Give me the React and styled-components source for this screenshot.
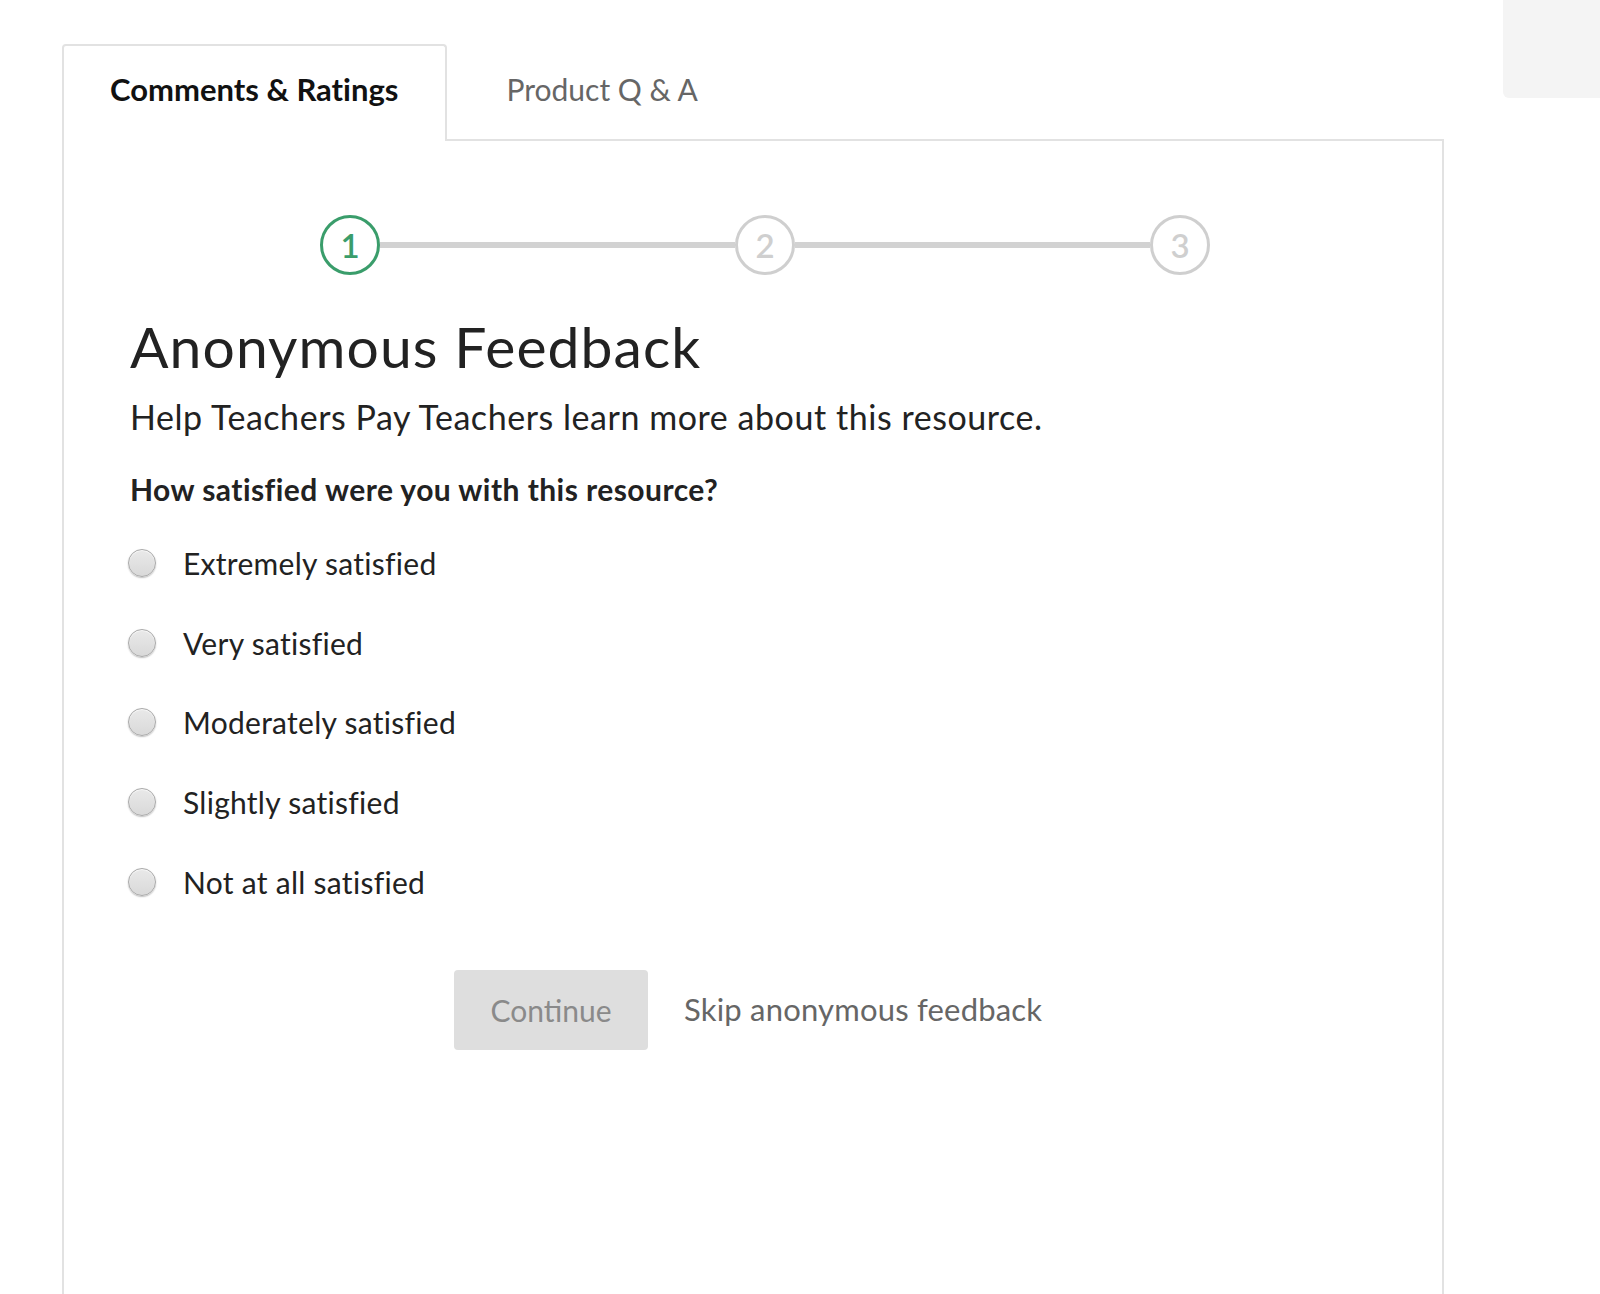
import React from "react";
import styled, { createGlobalStyle } from "styled-components";

const Global = createGlobalStyle`
  html, body { margin: 0; padding: 0; background: #fff; }
  body {
    font-family: Lato, "Open Sans", sans-serif;
    color: #222;
    font-variant-ligatures: none;
  }
`;

const Page = styled.div`
  position: relative;
  height: 1294px;
  overflow: hidden;
  padding: 44px 0 0 62px;
  box-sizing: border-box;
`;

const CornerBox = styled.div`
  position: absolute;
  top: 0;
  right: 0;
  width: 97px;
  height: 98px;
  background: #f4f4f4;
  border-bottom-left-radius: 6px;
`;

const Tabs = styled.div`
  display: flex;
  align-items: stretch;
  height: 95px;
  width: 1382px;
`;

const Tab = styled.div`
  display: flex;
  align-items: center;
  box-sizing: border-box;
  padding: 0 ${(p) => (p.$active ? "47px" : "0")} ${(p) => (p.$active ? "9px" : "5px")}
    ${(p) => (p.$active ? "46px" : "59px")};
  font-size: ${(p) => (p.$active ? "31px" : "30px")};
  font-weight: ${(p) => (p.$active ? 700 : 400)};
  color: ${(p) => (p.$active ? "#111" : "#666")};
  background: #fff;
  border: ${(p) => (p.$active ? "2px solid #e2e2e2" : "none")};
  border-bottom: none;
  border-radius: 4px 4px 0 0;
  margin-bottom: ${(p) => (p.$active ? "-2px" : "0")};
  position: relative;
  z-index: 1;
`;

const Panel = styled.div`
  width: 1382px;
  height: 1200px;
  box-sizing: border-box;
  border: 2px solid #e2e2e2;
  padding: 74px 0 0 66px;
`;

const Stepper = styled.div`
  display: flex;
  align-items: center;
  width: 890px;
  margin-left: 190px;
`;

const Step = styled.div`
  width: 60px;
  height: 60px;
  box-sizing: border-box;
  border-radius: 50%;
  border: 3px solid ${(p) => (p.$active ? "#3a9d6b" : "#cfcfcf")};
  color: ${(p) => (p.$active ? "#3a9d6b" : "#cfcfcf")};
  display: flex;
  align-items: center;
  justify-content: center;
  font-size: 33px;
  font-weight: 600;
  flex: none;
`;

const StepLine = styled.div`
  flex: 1;
  height: 6px;
  background: #d2d2d2;
`;

const Heading = styled.h1`
  margin: 39px 0 0;
  font-size: 57px;
  line-height: 65px;
  letter-spacing: 1.1px;
  font-weight: 400;
  color: #222;
`;

const Sub = styled.p`
  margin: 18px 0 0;
  font-size: 34px;
  line-height: 40px;
  letter-spacing: 0.55px;
  color: #222;
`;

const Question = styled.p`
  margin: 34px 0 0;
  font-size: 30px;
  line-height: 36px;
  letter-spacing: 0.45px;
  font-weight: 700;
  color: #222;
`;

const Options = styled.div`
  display: flex;
  flex-direction: column;
  margin-top: 16px;
`;

const Option = styled.label`
  display: flex;
  align-items: center;
  height: 79.7px;
  font-size: 30px;
  letter-spacing: 0.28px;
  color: #222;
  cursor: pointer;
`;

const Radio = styled.span`
  width: 28px;
  height: 28px;
  box-sizing: border-box;
  border-radius: 50%;
  border: 1px solid #a9a9a9;
  background: linear-gradient(#e9e9e9, #d9d9d9);
  box-shadow: 0 1px 1.5px rgba(0, 0, 0, 0.25), inset 0 1px 1px rgba(255, 255, 255, 0.8);
  margin: 0 27px 0 -2px;
  flex: none;
`;

const Actions = styled.div`
  display: flex;
  align-items: center;
  margin: 49px 0 0 324px;
  gap: 36px;
`;

const Button = styled.button`
  width: 194px;
  height: 80px;
  border: none;
  border-radius: 4px;
  background: #dedede;
  color: #8a8a8a;
  font-family: inherit;
  font-size: 30px;
  padding: 0;
`;

const SkipLink = styled.span`
  font-size: 31px;
  letter-spacing: 0.2px;
  color: #666;
  margin-top: -2px;
`;

const options = [
  "Extremely satisfied",
  "Very satisfied",
  "Moderately satisfied",
  "Slightly satisfied",
  "Not at all satisfied",
];

export default function App() {
  return (
    <>
      <Global />
      <Page>
        <CornerBox />
        <Tabs>
          <Tab $active>Comments &amp; Ratings</Tab>
          <Tab>Product Q &amp; A</Tab>
        </Tabs>
        <Panel>
          <Stepper>
            <Step $active>1</Step>
            <StepLine />
            <Step>2</Step>
            <StepLine />
            <Step>3</Step>
          </Stepper>
          <Heading>Anonymous Feedback</Heading>
          <Sub>Help Teachers Pay Teachers learn more about this resource.</Sub>
          <Question>How satisfied were you with this resource?</Question>
          <Options>
            {options.map((o) => (
              <Option key={o}>
                <Radio />
                {o}
              </Option>
            ))}
          </Options>
          <Actions>
            <Button disabled>Continue</Button>
            <SkipLink>Skip anonymous feedback</SkipLink>
          </Actions>
        </Panel>
      </Page>
    </>
  );
}
